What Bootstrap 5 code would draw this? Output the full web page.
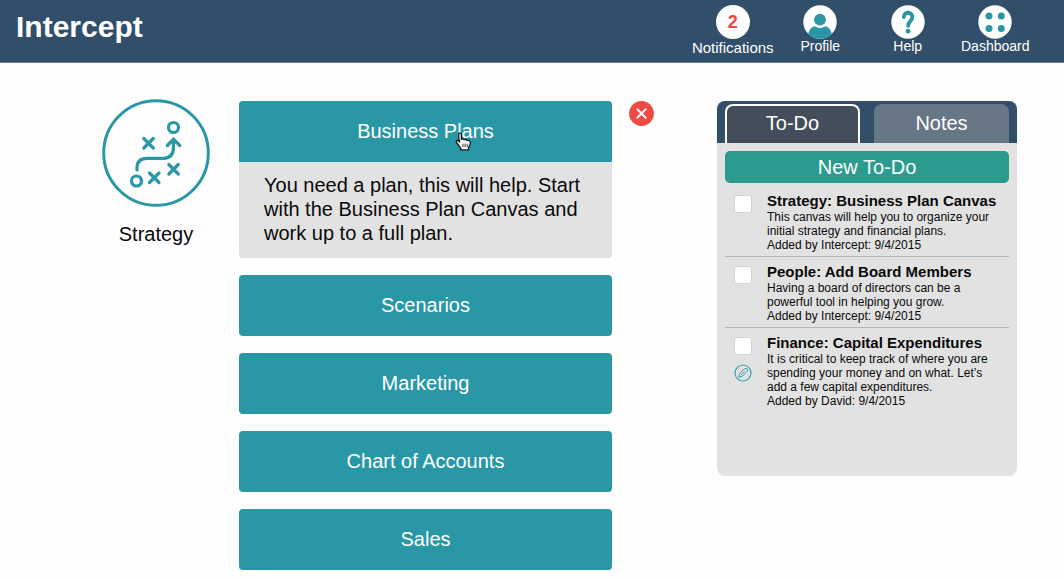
<!DOCTYPE html>
<html lang="en">
<head>
<meta charset="utf-8">
<meta name="viewport" content="width=device-width, initial-scale=1">
<title>Intercept</title>
<link href="https://cdn.jsdelivr.net/npm/bootstrap@5.3.0/dist/css/bootstrap.min.css" rel="stylesheet">
<style>
  :root { --teal: #2997a5; --navy: #314f6a; --panel: #e2e2e2; }
  body { font-family: "Liberation Sans", Arial, sans-serif; font-size: 20px; line-height: 24px; color: #0a0a0a; background: #fefefe; }
  .topbar { background: var(--navy); border-bottom: 1px solid #6f859a; padding: 5px 25px 5px 16px; }
  .topbar .navbar-brand { font-size: 30px; line-height: 44px; font-weight: 700; }
  .menu { display: grid; grid-template-columns: repeat(4, 1fr); width: 350px; }
  .menu a { color: #fff; text-decoration: none; font-size: 14px; line-height: 15px; }
  .menu a.wide-label { font-size: 15px; line-height: 18px; }
  .menu svg { width: 34px; height: 34px; }
  .count { width: 34px; height: 34px; background: #fff; color: #ef4641; font-size: 18px; font-weight: 700; }
  .workspace { padding: 38px 47px 9px 102px; }
  .topic { width: 108px; margin-right: 29px; }
  .topic svg { width: 108px; height: 108px; margin-top: -2px; }
  .topic h1 { font-size: 20px; line-height: 24px; font-weight: 400; margin: 15px 0 0; }
  .plans { gap: 17px; min-width: 300px; }
  .plan-btn { --bs-btn-color: #fff; --bs-btn-bg: var(--teal); --bs-btn-hover-color: #fff; --bs-btn-hover-bg: #24899a; --bs-btn-border-width: 0; --bs-btn-font-size: 20px; --bs-btn-line-height: 24px; --bs-btn-border-radius: 4px; height: 61px; padding: 5px 12px 7px; }
  .plan-open { background: var(--panel); border-radius: 4px; }
  .plan-open .plan-btn { border-radius: 4px 4px 0 0; }
  .plan-open p { padding: 11px 25px 13px; }
  .pointer { left: calc(50% + 29px); top: 31px; width: 17px; height: 19px; }
  .close-btn { width: 25px; height: 25px; margin-left: 17px; margin-right: 63px; }
  .side { width: 300px; min-height: 375px; background: var(--panel); border-radius: 8px; overflow: hidden; }
  .tabs { background: var(--navy); padding: 3px 8px 0; gap: 14px; }
  .tabs button { height: 39px; color: #fff; border: 2px solid transparent; border-bottom: 0; border-radius: 8px 8px 0 0; background: #687785; background-clip: border-box; padding: 0 0 3px; }
  .tabs button.active { background: #434e5a; border-color: #fff; }
  .side-body { padding: 8px 8px 0; }
  .new-btn { --bs-btn-color: #fff; --bs-btn-bg: #2b9b8f; --bs-btn-hover-color: #fff; --bs-btn-hover-bg: #268c81; --bs-btn-border-width: 0; --bs-btn-font-size: 20px; --bs-btn-line-height: 24px; --bs-btn-border-radius: 5px; --bs-btn-padding-y: 4px; margin-bottom: 3px; }
  .todo { padding: 6px 0 4px 9px; border-bottom: 1px solid #b4b4b4; font-size: 12px; line-height: 14px; }
  .todo:last-child { border-bottom: 0; }
  .todo label { font-size: 15px; line-height: 18px; font-weight: 700; }
  .todo .marks { width: 33px; padding-top: 3px; gap: 9px; }
  .todo .form-check-input { width: 18px; height: 18px; margin: 0; border: 1px solid #d3d3d3; border-radius: 3px; background-color: #fff; }
  .todo svg { width: 18px; height: 18px; }
</style>
</head>
<body>
<header class="topbar d-flex justify-content-between align-items-start">
  <a class="navbar-brand text-white m-0 p-0" href="#">Intercept</a>
  <nav class="menu" aria-label="Main">
    <a class="wide-label d-flex flex-column align-items-center" href="#">
      <span class="count rounded-circle d-flex align-items-center justify-content-center">2</span>Notifications</a>
    <a class="d-flex flex-column align-items-center" href="#">
      <svg viewBox="0 0 34 34" aria-hidden="true"><defs><clipPath id="disc"><circle cx="17" cy="17" r="16.7"/></clipPath></defs><circle cx="17" cy="17" r="16.7" fill="#fff"/><g fill="#2997a5" clip-path="url(#disc)"><circle cx="17" cy="14.7" r="5.900"/><path d="M4.500 34Q5 22.500 11.500 21.200Q17 24.800 22.500 21.200Q29 22.500 29.500 34Z"/></g></svg>Profile</a>
    <a class="d-flex flex-column align-items-center" href="#">
      <svg viewBox="0 0 34 34" aria-hidden="true"><circle cx="17" cy="17" r="16.700" fill="#fff"/><path d="M12.800 12C13 6.200 21.500 6.400 21.400 12.200C21.300 16 17.200 15.800 17.200 20.800" fill="none" stroke="#2997a5" stroke-width="3.800" stroke-linecap="round"/><circle cx="17.100" cy="26.200" r="2.400" fill="#2997a5"/></svg>Help</a>
    <a class="d-flex flex-column align-items-center" href="#">
      <svg viewBox="0 0 34 34" aria-hidden="true"><circle cx="17" cy="17" r="16.700" fill="#fff"/><g fill="#2997a5"><circle cx="11" cy="11" r="3.500"/><circle cx="23.300" cy="11" r="3.500"/><circle cx="11" cy="23.500" r="3.500"/><circle cx="23.300" cy="23.500" r="3.500"/></g></svg>Dashboard</a>
  </nav>
</header>

<main class="workspace d-flex align-items-start">
  <section class="topic flex-shrink-0 text-center">
    <svg class="d-block" viewBox="0 0 108 108" fill="none" stroke="#2997a5" stroke-width="3.200" aria-hidden="true">
      <circle cx="54" cy="54" r="52.300" stroke-width="3"/>
      <circle cx="71.500" cy="28.500" r="5"/>
      <circle cx="34.500" cy="82" r="5"/>
      <path stroke-linecap="round" d="M35 71V69Q35 59.300 45 59.300H61.500Q71.500 59.300 71.500 48V41M65.300 46.500L71.500 40.300L77.700 46.500"/>
      <path stroke-linecap="round" d="M41.800 39.500L51.300 49M51.300 39.500L41.800 49M47.500 74L57 83.500M57 74L47.500 83.500M66.800 65.500L76.300 75M76.300 65.500L66.800 75"/>
    </svg>
    <h1>Strategy</h1>
  </section>

  <section class="plans d-flex flex-column flex-fill">
    <div class="plan-open">
      <button type="button" class="btn plan-btn w-100 position-relative" aria-expanded="true" aria-controls="plan-text">Business Plans
        <svg class="pointer position-absolute" viewBox="0 0 16 18" aria-hidden="true"><path d="M3.500 2Q3.500 1 4.700 1Q6 1 6 2.300V6.800Q7.800 5.800 8.500 7.300Q10.500 6.400 11.200 8Q14.500 7.200 14.500 10.500Q14.500 12.500 12.800 14.500V17H5.500V15.300L1.300 9.900Q.6 8.300 2 7.900Q3.200 7.800 4.500 9.800L3.500 6Z" fill="#fff" stroke="#111" stroke-width="1.200"/><path d="M7.500 11V14.500M9.500 11V14.500M11.500 11V14.500" stroke="#111" stroke-width=".8"/></svg>
      </button>
      <p id="plan-text" class="m-0">You need a plan, this will help. Start with the Business Plan Canvas and work up to a full plan.</p>
    </div>
    <button type="button" class="btn plan-btn">Scenarios</button>
    <button type="button" class="btn plan-btn">Marketing</button>
    <button type="button" class="btn plan-btn">Chart of Accounts</button>
    <button type="button" class="btn plan-btn">Sales</button>
  </section>

  <button type="button" class="close-btn btn p-0 border-0 flex-shrink-0 d-flex" aria-label="Close">
    <svg width="25" height="25" viewBox="0 0 25 25" aria-hidden="true"><circle cx="12.500" cy="12.500" r="12.400" fill="#f04843"/><path d="M8.300 8.300L16.700 16.700M16.700 8.300L8.300 16.700" stroke="#fff" stroke-width="2" stroke-linecap="round"/></svg>
  </button>

  <aside class="side flex-shrink-0">
    <div class="tabs d-flex" role="tablist">
      <button type="button" class="active flex-fill w-50" role="tab" aria-selected="true">To-Do</button>
      <button type="button" class="flex-fill w-50" role="tab" aria-selected="false">Notes</button>
    </div>
    <div class="side-body">
      <button type="button" class="btn new-btn w-100">New To-Do</button>
      <ul class="list-unstyled m-0">
        <li class="todo d-flex">
          <div class="marks d-flex flex-column flex-shrink-0"><input class="form-check-input" type="checkbox" id="t1"></div>
          <div><label class="d-block" for="t1">Strategy: Business Plan Canvas</label>This canvas will help you to organize your<br>initial strategy and financial plans.<br>Added by Intercept: 9/4/2015</div>
        </li>
        <li class="todo d-flex">
          <div class="marks d-flex flex-column flex-shrink-0"><input class="form-check-input" type="checkbox" id="t2"></div>
          <div><label class="d-block" for="t2">People: Add Board Members</label>Having a board of directors can be a<br>powerful tool in helping you grow.<br>Added by Intercept: 9/4/2015</div>
        </li>
        <li class="todo d-flex">
          <div class="marks d-flex flex-column flex-shrink-0"><input class="form-check-input" type="checkbox" id="t3">
            <svg viewBox="0 0 18 18" fill="none" stroke="#3a9fac" aria-hidden="true"><circle cx="9" cy="9" r="8" stroke-width="1.200"/><path d="M4.700 13.300L5.700 9.400L10.600 4.800Q12 3.800 13.200 4.900Q14.200 6.100 13.100 7.400L8.400 12.300ZM7 11L10.500 7.500"/></svg>
          </div>
          <div><label class="d-block" for="t3">Finance: Capital Expenditures</label>It is critical to keep track of where you are<br>spending your money and on what. Let’s<br>add a few capital expenditures.<br>Added by David: 9/4/2015</div>
        </li>
      </ul>
    </div>
  </aside>
</main>
<script src="https://cdn.jsdelivr.net/npm/bootstrap@5.3.0/dist/js/bootstrap.bundle.min.js"></script>
</body>
</html>
